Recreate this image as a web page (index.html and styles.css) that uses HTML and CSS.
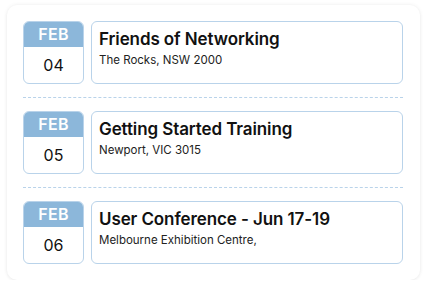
FILE: index.html
```html
<!DOCTYPE html>
<html>
<head>
<meta charset="utf-8">
<link rel="stylesheet" href="styles.css">
</head>
<body>
<div class="card">
  <div class="row">
    <div class="date"><div class="month">FEB</div><div class="day">04</div></div>
    <div class="event"><div class="title">Friends of Networking</div><div class="place">The Rocks, NSW 2000</div></div>
  </div>
  <div class="sep"></div>
  <div class="row">
    <div class="date"><div class="month">FEB</div><div class="day">05</div></div>
    <div class="event"><div class="title">Getting Started Training</div><div class="place">Newport, VIC 3015</div></div>
  </div>
  <div class="sep"></div>
  <div class="row">
    <div class="date"><div class="month">FEB</div><div class="day">06</div></div>
    <div class="event"><div class="title">User Conference - Jun 17-19</div><div class="place">Melbourne Exhibition Centre,</div></div>
  </div>
</div>
</body>
</html>
```
FILE: styles.css
```css
html, body { margin: 0; padding: 0; background: #ffffff; }
body { padding: 5px 7px 0 7px; font-family: Inter, "Noto Sans", sans-serif; color: #111; }
.card {
  width: 413px;
  box-sizing: border-box;
  padding: 16px 17px 16px 16px;
  background: #fff;
  border-radius: 10px;
  box-shadow: 0 0 4px rgba(0,0,0,0.07), 0 1px 3px rgba(0,0,0,0.04);
}
.row { display: flex; gap: 7px; height: 63px; }
.date {
  width: 61px; flex: none; box-sizing: border-box;
  border: 1px solid #b9d3ea; border-radius: 6px; overflow: hidden;
  display: flex; flex-direction: column; text-align: center;
}
.month {
  background: #8cb7da; color: #fff; font-weight: 600; font-size: 16px;
  height: 25px; line-height: 25px; letter-spacing: 0.3px;
}
.day { flex: 1; font-size: 16px; line-height: 36px; color: #111; }
.event {
  flex: 1; box-sizing: border-box;
  border: 1px solid #b9d3ea; border-radius: 6px;
  padding: 6px 7px;
}
.title { font-size: 17px; font-weight: 600; line-height: 22px; letter-spacing: -0.1px; }
.place { font-size: 11.5px; line-height: 16px; margin-top: 2px; color: #222; }
.sep { height: 0; border-top: 1px dashed #b9d3ea; margin: 13px 0 13px; }
```
